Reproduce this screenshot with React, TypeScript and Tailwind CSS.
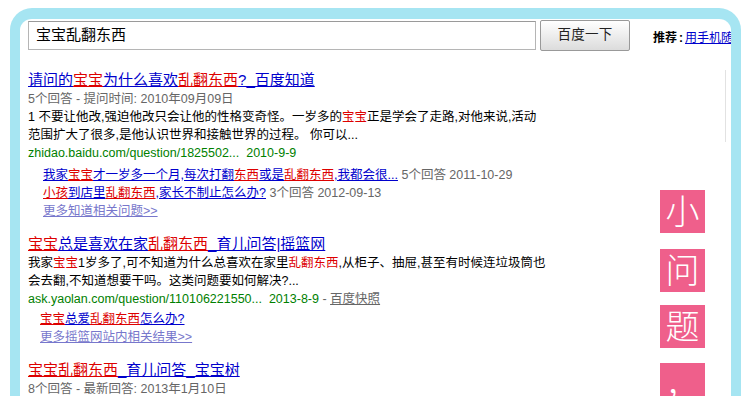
import React from "react";

type Seg = [string, boolean?];

const FONT = { fontFamily: '"Liberation Sans", "Noto Sans CJK SC", sans-serif' };

function LinkText({ segs }: { segs: Seg[] }) {
  return (
    <a href="#" className="whitespace-nowrap">
      {segs.map(([t, red], i) => (
        <span key={i} className={"underline " + (red ? "text-[#dd0000]" : "text-[#0000cc]")}>
          {t}
        </span>
      ))}
    </a>
  );
}

const Red = ({ children }: { children: React.ReactNode }) => (
  <span className="text-[#dd0000]">{children}</span>
);

function Title({ segs }: { segs: Seg[] }) {
  return (
    <div className="h-[20px] leading-[20px] text-[15px] whitespace-nowrap">
      <LinkText segs={segs} />
    </div>
  );
}

function Line({ children, className = "" }: { children: React.ReactNode; className?: string }) {
  return <div className={"h-[18px] leading-[18px] text-[12.5px] whitespace-nowrap " + className}>{children}</div>;
}

function PinkBox({ ch, className = "" }: { ch: string; className?: string }) {
  return (
    <div
      className={
        "w-[45px] h-[43px] bg-[#ef5f8b] text-white flex items-center justify-center text-[34px] font-light leading-none " +
        className
      }
    >
      {ch}
    </div>
  );
}

export default function App() {
  return (
    <div className="w-[750px] h-[396px] overflow-hidden bg-white pl-[10px] pt-[8px]" style={FONT}>
      <div className="relative w-[731px] h-[420px] border-[#a6e5f2] border-l-[10px] border-r-[10px] border-t-[11px] rounded-tl-[22px] rounded-tr-[22px] bg-white overflow-hidden">
        {/* faint vertical line */}
        <div className="absolute left-[705px] top-[51px] w-px h-[72px] bg-[#e2e2e2]" />

        {/* header */}
        <div className="flex items-start h-[51px] pl-[8px] whitespace-nowrap overflow-hidden">
          <div className="shrink-0 mt-[2px] w-[508px] h-[29px] border border-[#b5b5b5] border-t-[#9a9a9a] flex items-center pl-[7px] text-[15px] text-black">
            宝宝乱翻东西
          </div>
          <div className="shrink-0 ml-[4px] mt-[1px] w-[90px] h-[31px] border border-[#999] rounded-[2px] bg-gradient-to-b from-white to-[#dcdcdc] flex items-center justify-center text-[13.5px] text-[#222] tracking-[0.3px]">
            百度一下
          </div>
          <div className="shrink-0 ml-[23px] mt-[11px] text-[12px] leading-[16px]">
            <span className="font-bold text-black">推荐</span>
            <span className="font-bold text-black mx-[2px]">:</span>
            <a href="#" className="text-[#0000cc] underline">用手机随时随地上百度</a>
          </div>
        </div>

        {/* body */}
        <div className="flex pl-[8px]">
          <div className="w-[632px] shrink-0 text-black">
            {/* result 1 */}
            <Title
              segs={[
                ["请问的"],
                ["宝宝", true],
                ["为什么喜欢"],
                ["乱翻东西", true],
                ["?_百度知道"],
              ]}
            />
            <Line className="text-[#666]">5个回答 - 提问时间: 2010年09月09日</Line>
            <Line>
              1 不要让他改,强迫他改只会让他的性格变奇怪。一岁多的<Red>宝宝</Red>正是学会了走路,对他来说,活动
            </Line>
            <Line>范围扩大了很多,是他认识世界和接触世界的过程。 你可以...</Line>
            <Line className="text-[#008000]">zhidao.baidu.com/question/1825502...&nbsp; 2010-9-9</Line>
            <div className="pl-[15px] mt-[4px]">
              <Line>
                <LinkText
                  segs={[
                    ["我家"],
                    ["宝宝", true],
                    ["才一岁多一个月,每次打翻"],
                    ["东西", true],
                    ["或是"],
                    ["乱翻东西", true],
                    [",我都会很..."],
                  ]}
                />
                <span className="text-[#666]"> 5个回答 2011-10-29</span>
              </Line>
              <Line>
                <LinkText
                  segs={[
                    ["小孩", true],
                    ["到店里"],
                    ["乱翻东西", true],
                    [",家长不制止怎么办?"],
                  ]}
                />
                <span className="text-[#666]"> 3个回答 2012-09-13</span>
              </Line>
              <Line>
                <a href="#" className="text-[#7777cc] underline">
                  更多知道相关问题&gt;&gt;
                </a>
              </Line>
            </div>

            {/* result 2 */}
            <div className="mt-[14px]">
              <Title
                segs={[
                  ["宝宝", true],
                  ["总是喜欢在家"],
                  ["乱翻东西", true],
                  ["_育儿问答|摇篮网"],
                ]}
              />
            </div>
            <Line>
              我家<Red>宝宝</Red>1岁多了,可不知道为什么总喜欢在家里<Red>乱翻东西</Red>,从柜子、抽屉,甚至有时候连垃圾筒也
            </Line>
            <Line>会去翻,不知道想要干吗。这类问题要如何解决?...</Line>
            <Line>
              <span className="text-[#008000]">ask.yaolan.com/question/110106221550...&nbsp; 2013-8-9</span>
              <span className="text-[#666]"> - </span>
              <a href="#" className="text-[#666] underline">
                百度快照
              </a>
            </Line>
            <div className="pl-[12px] mt-[2px]">
              <Line>
                <LinkText
                  segs={[
                    ["宝宝", true],
                    ["总爱"],
                    ["乱翻东西", true],
                    ["怎么办?"],
                  ]}
                />
              </Line>
              <Line>
                <a href="#" className="text-[#7777cc] underline">
                  更多摇篮网站内相关结果&gt;&gt;
                </a>
              </Line>
            </div>

            {/* result 3 */}
            <div className="mt-[14px]">
              <Title
                segs={[
                  ["宝宝乱翻东西", true],
                  ["_育儿问答_宝宝树"],
                ]}
              />
            </div>
            <Line className="text-[#666]">8个回答 - 最新回答: 2013年1月10日</Line>
          </div>

          <div className="pt-[120px] flex flex-col shrink-0">
            <PinkBox ch="小" />
            <PinkBox ch="问" className="mt-[16px]" />
            <PinkBox ch="题" className="mt-[13px]" />
            <PinkBox ch="，" className="mt-[15px]" />
          </div>
        </div>
      </div>
    </div>
  );
}
